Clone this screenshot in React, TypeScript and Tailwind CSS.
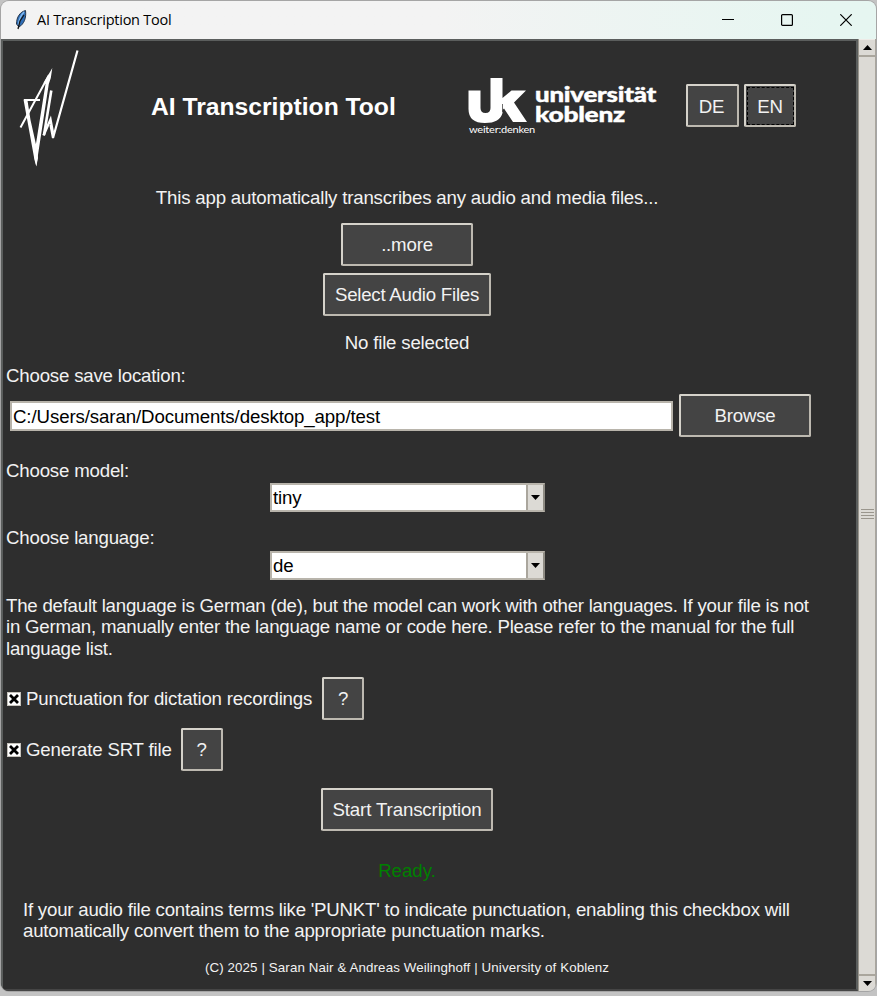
import React from "react";

type ButtonProps = { children: React.ReactNode; className?: string; focused?: boolean };

function TkButton({ children, className = "", focused = false }: ButtonProps) {
  return (
    <button
      className={`flex h-[43px] shrink-0 items-center justify-center rounded-[2px] border-2 border-t-[#d5d2ca] border-l-[#d5d2ca] border-r-[#bdb9b0] border-b-[#bdb9b0] bg-[#444444] text-[#f2f2f2] ${className}`}
    >
      <span
        className={`flex items-center justify-center pt-px whitespace-nowrap ${focused ? "h-[38px] w-[47px] border border-dashed border-black" : "h-full w-full"}`}
      >
        {children}
      </span>
    </button>
  );
}

function Combo({ value }: { value: string }) {
  return (
    <div className="ml-[266px] flex h-[29px] w-[275px] border-2 border-[#b8b4ab] border-r-[#8f8c84] bg-white text-black">
      <span className="flex-1 pl-[1px] leading-[26px]">{value}</span>
      <span className="flex w-[17px] items-center justify-center border-l-2 border-[#aaa69d] bg-[#dcdad5]">
        <svg width="9" height="5" viewBox="0 0 9 5">
          <path d="M0 0H9L4.5 5Z" fill="#000" />
        </svg>
      </span>
    </div>
  );
}

function CheckBox({ label }: { label: string }) {
  return (
    <label className="flex items-center pt-px tracking-[-0.175px]">
      <svg width="14" height="14" viewBox="0 0 14 14" className="shrink-0">
        <path d="M0 0H14V14H0Z" fill="#c6c3bc" />
        <path d="M1 1H13V13H1Z" fill="#fff" />
        <path d="M3 3L11 11M11 3L3 11" stroke="#000" strokeWidth="2.800" />
      </svg>
      <span className="ml-[5px] whitespace-nowrap">{label}</span>
    </label>
  );
}

function UniversityLogo() {
  return (
    <svg width="192" height="62" viewBox="466 76 192 62" fill="#fff">
      <path d="M468.500 90.500H480.500V108Q480.500 113 485.500 113Q490.500 113 490.500 108V78H502.500V98L511.500 90.500H526L514 102.500L527 122H513L504 108.500L502.500 110V113Q500 123 485 123Q468.500 123 468.500 109Z" />
      <path d="M502.500 104V112" stroke="#2e2e2e" strokeWidth="0.700" />
      <text x="535" y="101.500" fontFamily="Lato, sans-serif" fontWeight="900" fontSize="20.500" textLength="121" lengthAdjust="spacingAndGlyphs" stroke="#fff" strokeWidth="0.400">universität</text>
      <text x="535" y="121.800" fontFamily="Lato, sans-serif" fontWeight="900" fontSize="20.500" textLength="90" lengthAdjust="spacingAndGlyphs" stroke="#fff" strokeWidth="0.400">koblenz</text>
      <text x="469" y="133" fontFamily="Lato, sans-serif" fontSize="9" textLength="66" lengthAdjust="spacingAndGlyphs">weiter:denken</text>
    </svg>
  );
}

function StarLogo() {
  return (
    <svg width="62" height="122" viewBox="18 47 62 122" fill="#fff" stroke="#fff">
      <path d="M20.500 127.500L49 75M24 100H40" strokeWidth="2" fill="none" />
      <path d="M52.300 68L50.800 78L48.800 84L36.300 166L34 156L45.500 84L43.500 83Z" stroke="none" />
      <path d="M23.500 99.500L27.500 100.500L30.500 120L36.800 148L38 158L36.300 166.500L34.500 160Z" stroke="none" />
      <path d="M51.300 90.500L44 135" strokeWidth="2.600" fill="none" />
      <path d="M43.500 135.500L50.500 119.500L53 133" strokeWidth="2.400" fill="none" />
      <path d="M77.500 50.500L53 138L50.500 125" strokeWidth="2.200" fill="none" />
    </svg>
  );
}

function TitleBar() {
  return (
    <header className="flex h-[38px] shrink-0 items-center bg-linear-to-r from-[#f3f3f3] from-50% to-[#e6f6f1] to-95% font-['Open_Sans',sans-serif] text-black">
      <svg className="ml-[14px]" width="12" height="20" viewBox="0 0 12 20">
        <path d="M10.500 0.500C5 2 1.500 7 1.500 14L4 17C9 14 11.500 8 10.500 0.500Z" fill="#2f6fb8" stroke="#27364a" />
        <path d="M9 2C5 6 4 10 3.500 15" stroke="#83baf0" strokeWidth="1.500" fill="none" />
        <path d="M9 5L5 11L3 19" stroke="#151515" strokeWidth="1.300" fill="none" />
      </svg>
      <span className="ml-[10px] text-[14.500px] tracking-[-0.240px]">AI Transcription Tool</span>
      <div className="mr-[24px] ml-auto flex items-center gap-[47px]">
        <svg width="12" height="12" viewBox="0 0 12 12" fill="none" stroke="#000">
          <path d="M0 5.500H12" />
        </svg>
        <svg width="12" height="12" viewBox="0 0 12 12" fill="none" stroke="#000" strokeWidth="1.200">
          <rect x="0.600" y="0.600" width="10.800" height="10.800" rx="1" />
        </svg>
        <svg width="12" height="12" viewBox="0 0 12 12" fill="none" stroke="#000" strokeWidth="1.200">
          <path d="M0.300 0.300L11.700 11.700M11.700 0.300L0.300 11.700" />
        </svg>
      </div>
    </header>
  );
}

function ScrollBar() {
  return (
    <div className="flex w-[18px] shrink-0 flex-col border-x border-l-[#99958c] border-r-[#aaa69e] bg-[#dcdad5]">
      <div className="flex h-[16px] items-center justify-center border-t border-[#eeebe7]">
        <svg width="9" height="5" viewBox="0 0 9 5">
          <path d="M0 5H9L4.500 0Z" />
        </svg>
      </div>
      <div className="flex flex-1 items-center justify-center border-y-2 border-[#aaa69d] pb-[4px]">
        <div className="flex w-[13px] flex-col gap-[2px]">
          <i className="h-px bg-[#9a968d]" />
          <i className="h-px bg-[#9a968d]" />
          <i className="h-px bg-[#9a968d]" />
          <i className="h-px bg-[#9a968d]" />
        </div>
      </div>
      <div className="flex h-[15px] items-center justify-center">
        <svg width="9" height="5" viewBox="0 0 9 5">
          <path d="M0 0H9L4.500 5Z" />
        </svg>
      </div>
    </div>
  );
}

export default function App() {
  return (
    <div className="h-[996px] w-[877px] overflow-hidden bg-[#c3c3c3] pt-px pl-px">
      <div className="flex h-[990px] w-[875px] flex-col overflow-hidden rounded-[8px] shadow-[0_0_0_1px_#a5a5a5]">
        <TitleBar />
        <div className="flex min-h-0 flex-1">
          <main className="flex w-[857px] shrink-0 flex-col border-2 border-[#5b5e5d] border-b-[#454545] bg-[#2e2e2e] pl-px font-['Liberation_Sans',Arial,sans-serif] text-[18.670px] leading-[21px] tracking-[-0.190px] text-[#f2f2f2]">
            <div className="flex h-[134px] shrink-0">
              <div className="mt-[6px] ml-[14px] w-[62px]">
                <StarLogo />
              </div>
              <h1 className="mt-[52px] ml-[71px] w-[316px] text-[24.670px] leading-[28px] font-bold tracking-normal whitespace-nowrap text-white">
                AI Transcription Tool
              </h1>
              <div className="mt-[35px] -ml-px w-[192px]">
                <UniversityLogo />
              </div>
              <div className="mt-[43px] ml-[28px] flex gap-[5px]">
                <TkButton className="w-[53px] pr-[2px]">DE</TkButton>
                <TkButton className="w-[52px]" focused>EN</TkButton>
              </div>
            </div>
            <div className="flex h-[182px] w-[806px] shrink-0 flex-col items-center">
              <p className="h-[48px] pt-[12px] whitespace-nowrap">This app automatically transcribes any audio and media files...</p>
              <TkButton className="w-[132px] pb-px">..more</TkButton>
              <TkButton className="mt-[7px] w-[168px] pb-px tracking-[-0.230px]">Select Audio Files</TkButton>
              <p className="mt-[16px]">No file selected</p>
            </div>
            <p className="mt-[8px] ml-[2px]">Choose save location:</p>
            <div className="mt-[7px] flex h-[44px] shrink-0 items-center">
              <div className="mt-px ml-[6px] h-[30px] w-[663px] border-2 border-[#b8b4ab] bg-white pl-[1px] leading-[27px] tracking-[-0.100px] text-black">
                C:/Users/saran/Documents/desktop_app/test
              </div>
              <TkButton className="ml-[6px] w-[132px]">Browse</TkButton>
            </div>
            <p className="mt-[23px] ml-[2px]">Choose model:</p>
            <div className="mt-[2px]">
              <Combo value="tiny" />
            </div>
            <p className="mt-[15px] ml-[2px]">Choose language:</p>
            <div className="mt-[3px]">
              <Combo value="de" />
            </div>
            <p className="mt-[15px] ml-[2px] leading-[21.330px] tracking-[-0.235px] whitespace-nowrap">
              The default language is German (de), but the model can work with other languages. If your file is not
              <br />
              in German, manually enter the language name or code here. Please refer to the manual for the full
              <br />
              language list.
            </p>
            <div className="mt-[18px] ml-[3px] flex gap-[10px]">
              <CheckBox label="Punctuation for dictation recordings" />
              <TkButton className="w-[42px]">?</TkButton>
            </div>
            <div className="mt-[8px] ml-[3px] flex gap-[9px]">
              <CheckBox label="Generate SRT file" />
              <TkButton className="w-[42px]">?</TkButton>
            </div>
            <div className="mt-[17px] flex w-[806px] flex-col items-center">
              <TkButton className="w-[172px] tracking-[-0.120px]">Start Transcription</TkButton>
              <p className="mt-[29px] tracking-normal text-[#008000]">Ready.</p>
            </div>
            <p className="mt-[18px] ml-[19px] tracking-[-0.225px] whitespace-nowrap">
              If your audio file contains terms like 'PUNKT' to indicate punctuation, enabling this checkbox will
              <br />
              automatically convert them to the appropriate punctuation marks.
            </p>
            <p className="mt-[16px] w-[806px] text-center text-[13.330px] tracking-[0.110px]">(C) 2025 | Saran Nair &amp; Andreas Weilinghoff | University of Koblenz</p>
          </main>
          <ScrollBar />
        </div>
      </div>
    </div>
  );
}
